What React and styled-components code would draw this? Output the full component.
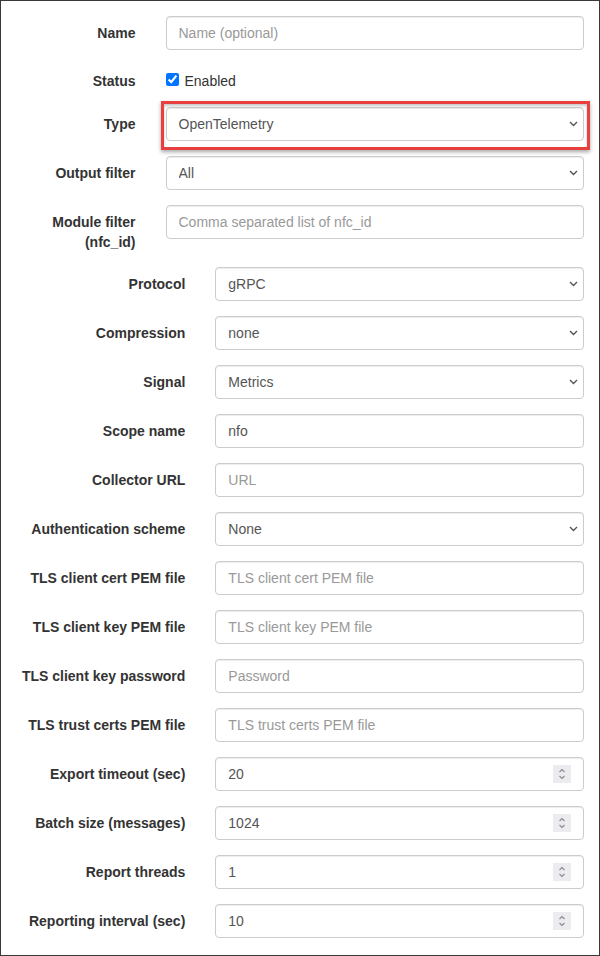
import React from "react";
import styled, { createGlobalStyle } from "styled-components";

const GlobalStyle = createGlobalStyle`
  html, body { margin: 0; padding: 0; background: #fff; }
  body { font-family: "Liberation Sans", Arial, sans-serif; font-size: 14px; line-height: 1.42857; color: #333; }
  * { box-sizing: border-box; }
`;

const Frame = styled.div`
  width: 600px;
  height: 956px;
  border: 1px solid #3a3a3a;
  padding-top: 15px;
  background: #fff;
`;

const FormRow = styled.div`
  display: grid;
  grid-template-columns: ${(p) => p.$labelWidth} 1fr;
  margin-bottom: 15px;
`;

const Label = styled.label`
  padding: 7px 15px 0;
  text-align: right;
  font-weight: bold;
  font-size: 14px;
  line-height: 20px;
  color: #333;
  padding-top: ${(p) => (p.$tight ? "6px" : "7px")};
`;

const FieldCell = styled.div`
  position: relative;
  padding: 0 15px;
`;

const controlBase = `
  height: 34px;
  width: 100%;
  border: 1px solid #ccc;
  border-radius: 4px;
  background: #fff;
  box-shadow: inset 0 1px 1px rgba(0, 0, 0, 0.075);
  font-family: "Liberation Sans", Arial, sans-serif;
  font-size: 14px;
  color: #555;
`;

const TextInput = styled.input`
  ${controlBase}
  display: block;
  padding: 6px 12px;
  outline: none;
  &::placeholder { color: #999; opacity: 1; }
`;

const SelectShell = styled.div`
  ${controlBase}
  display: flex;
  align-items: center;
  padding-right: 5px;
`;

const SelectBox = styled.select`
  appearance: none;
  -webkit-appearance: none;
  flex: 1;
  min-width: 0;
  height: 100%;
  border: none;
  background: transparent;
  padding: 0 12px;
  font-family: inherit;
  font-size: 14px;
  color: #555;
  outline: none;
`;

const Chevron = styled.svg`
  flex: none;
  pointer-events: none;
`;

const NumberShell = styled.div`
  ${controlBase}
  display: flex;
  align-items: center;
  padding: 0 12px;
`;

const NumberInput = styled.input`
  flex: 1;
  min-width: 0;
  border: none;
  outline: none;
  padding: 0;
  background: transparent;
  font-family: inherit;
  font-size: 14px;
  color: #555;
  appearance: textfield;
  -moz-appearance: textfield;
  &::-webkit-inner-spin-button,
  &::-webkit-outer-spin-button { -webkit-appearance: none; margin: 0; }
`;

const Spinner = styled.svg`
  flex: none;
  display: block;
`;

const CheckLabel = styled.label`
  display: flex;
  align-items: flex-start;
  gap: 6px;
  padding-top: 6px;
  height: 27px;
  line-height: 20px;
  font-size: 14px;
  color: #333;
`;

const Checkbox = styled.input`
  margin: 2px 0 0;
  width: 13px;
  height: 13px;
  flex: none;
`;

const Highlight = styled.span`
  position: absolute;
  top: -6px;
  bottom: -9px;
  left: 10px;
  right: 9px;
  border: 3px solid #e8403f;
  box-shadow: 0 2px 4px rgba(0, 0, 0, 0.35), inset 0 2px 3px rgba(0, 0, 0, 0.22);
  pointer-events: none;
`;

const ChevronIcon = () => (
  <Chevron width="9" height="6" viewBox="0 0 9 6">
    <path d="M1 1 L4.5 4.5 L8 1" fill="none" stroke="#555" strokeWidth="1.4" />
  </Chevron>
);

const SpinIcon = () => (
  <Spinner width="18" height="18" viewBox="0 0 18 18">
    <rect x="0" y="0" width="18" height="18" fill="#ebebf0" />
    <path d="M6.5 7 L9 4.5 L11.5 7" fill="none" stroke="#8a8a8a" strokeWidth="1.1" />
    <path d="M6.5 11 L9 13.5 L11.5 11" fill="none" stroke="#8a8a8a" strokeWidth="1.1" />
  </Spinner>
);

const Select = ({ value, options }) => (
  <SelectShell>
    <SelectBox defaultValue={value}>
      {(options || [value]).map((o) => (
        <option key={o} value={o}>{o}</option>
      ))}
    </SelectBox>
    <ChevronIcon />
  </SelectShell>
);

const NumberField = ({ value }) => (
  <NumberShell>
    <NumberInput type="number" defaultValue={value} />
    <SpinIcon />
  </NumberShell>
);

const Row = ({ label, width, children }) => (
  <FormRow $labelWidth={width}>
    <Label>{label}</Label>
    <FieldCell>{children}</FieldCell>
  </FormRow>
);

const W1 = "25%";
const W2 = "33.3333%";

const textRows = [
  { label: "Collector URL", placeholder: "URL" },
];

export default function App() {
  return (
    <>
      <GlobalStyle />
      <Frame>
        <Row label="Name" width={W1}>
          <TextInput type="text" placeholder="Name (optional)" />
        </Row>
        <FormRow $labelWidth={W1}>
          <Label $tight>Status</Label>
          <FieldCell>
            <CheckLabel>
              <Checkbox type="checkbox" defaultChecked />
              Enabled
            </CheckLabel>
          </FieldCell>
        </FormRow>
        <FormRow $labelWidth={W1}>
          <Label>Type</Label>
          <FieldCell>
            <Select value="OpenTelemetry" />
            <Highlight />
          </FieldCell>
        </FormRow>
        <Row label="Output filter" width={W1}>
          <Select value="All" />
        </Row>
        <Row label="Module filter (nfc_id)" width={W1}>
          <TextInput type="text" placeholder="Comma separated list of nfc_id" />
        </Row>

        <Row label="Protocol" width={W2}>
          <Select value="gRPC" />
        </Row>
        <Row label="Compression" width={W2}>
          <Select value="none" />
        </Row>
        <Row label="Signal" width={W2}>
          <Select value="Metrics" />
        </Row>
        <Row label="Scope name" width={W2}>
          <TextInput type="text" defaultValue="nfo" />
        </Row>
        {textRows.map((r) => (
          <Row key={r.label} label={r.label} width={W2}>
            <TextInput type="text" placeholder={r.placeholder} />
          </Row>
        ))}
        <Row label="Authentication scheme" width={W2}>
          <Select value="None" />
        </Row>
        <Row label="TLS client cert PEM file" width={W2}>
          <TextInput type="text" placeholder="TLS client cert PEM file" />
        </Row>
        <Row label="TLS client key PEM file" width={W2}>
          <TextInput type="text" placeholder="TLS client key PEM file" />
        </Row>
        <Row label="TLS client key password" width={W2}>
          <TextInput type="password" placeholder="Password" />
        </Row>
        <Row label="TLS trust certs PEM file" width={W2}>
          <TextInput type="text" placeholder="TLS trust certs PEM file" />
        </Row>
        <Row label="Export timeout (sec)" width={W2}>
          <NumberField value={20} />
        </Row>
        <Row label="Batch size (messages)" width={W2}>
          <NumberField value={1024} />
        </Row>
        <Row label="Report threads" width={W2}>
          <NumberField value={1} />
        </Row>
        <Row label="Reporting interval (sec)" width={W2}>
          <NumberField value={10} />
        </Row>
      </Frame>
    </>
  );
}
